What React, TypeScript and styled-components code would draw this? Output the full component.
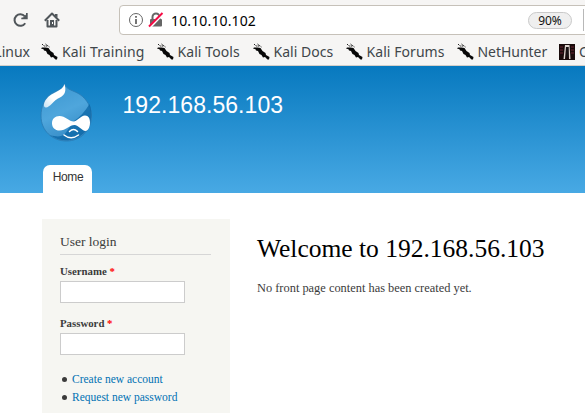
import React from "react";
import styled, { createGlobalStyle } from "styled-components";

const Global = createGlobalStyle`
  * { box-sizing: border-box; }
  body { margin: 0; background: #fff; overflow: hidden; }
`;
const Window = styled.div`
  width: 585px; height: 413px; overflow: hidden;
  display: flex; flex-direction: column;
  font-family: "Liberation Serif", serif; color: #3b3b3b;
`;
const Chrome = styled.div`
  height: 66px; flex: none; background: #f6f5f4; border-bottom: 1px solid #d3cfca;
  font-family: "Noto Sans", sans-serif; overflow: hidden;
`;
const Toolbar = styled.div`
  display: flex; align-items: flex-start; height: 38px; padding: 5px 0 0 12px;
`;
const ToolIcon = styled.svg`
  width: 18px; height: 18px; margin: 6px 14px 0 0; flex: none;
`;
const AddressBar = styled.div`
  margin-left: 43px; width: 480px; height: 30px; flex: none; display: flex; align-items: center;
  background: #fff; border: 1px solid #c6c1b9; border-radius: 4px; padding-left: 8px;
`;
const BarIcon = styled.svg<{ $gap: number }>`
  width: 16px; height: 16px; flex: none; margin-right: ${p => p.$gap}px;
`;
const Address = styled.span`
  font-size: 14px; color: #000; width: 357px; line-height: 28px; letter-spacing: 0.14px; padding-top: 1px;
`;
const Zoom = styled.span`
  width: 44px; height: 17px; border: 1px solid #c9c9c9; border-radius: 9px; background: #efefef;
  font-size: 12px; line-height: 15px; text-align: center; color: #111; margin-right: 11px;
`;
const Separator = styled.i`width: 1px; height: 22px; background: #b8b8b8;`;
const Bookmarks = styled.div`display: flex; align-items: center; height: 27px;`;
const Bookmark = styled.div<{ $w: number }>`
  display: flex; align-items: center; width: ${p => p.$w}px; flex: none; white-space: nowrap;
`;
const Label = styled.span<{ $ls?: number }>`
  font-size: 14px; line-height: 20px; color: #40464a; letter-spacing: ${p => p.$ls ?? 0}px;
`;
const LeadingLabel = styled(Label)`
  width: 30px; display: flex; justify-content: flex-end;
`;
const Favicon = styled.svg`width: 17px; height: 17px; flex: none; margin-right: 4px;`;

const Header = styled.header`
  height: 127px; flex: none; padding: 16px 0 0 40px;
  background: linear-gradient(#0779bf, #48a9e4);
  display: flex; flex-direction: column; justify-content: space-between;
  font-family: "Liberation Sans", sans-serif;
`;
const Brand = styled.div`display: flex; align-items: flex-start;`;
const Logo = styled.svg`width: 53px; height: 62px; flex: none;`;
const SiteName = styled.div`margin: 9px 0 0 29.5px; color: #fffeff; font-size: 23px; line-height: 28px; letter-spacing: 0.05px;`;
const Tab = styled.div`
  width: 49px; height: 28px; margin-left: 3px; background: #fff; border-radius: 7px 7px 0 0;
  color: #333; font-size: 12px; line-height: 24px; text-align: center; letter-spacing: -0.4px; padding-left: 1px;
`;
const Page = styled.main`display: flex; flex: 1; padding: 27px 0 0 42px;`;
const Sidebar = styled.aside`
  width: 188px; background: #f6f6f2; padding: 13px 19px 0 18px; flex: none; margin-top: -1px;
`;
const BlockTitle = styled.h2`
  margin: 0 0 7px; font-weight: 400; font-size: 13.5px; line-height: 20px; height: 23px;
  border-bottom: 1px solid #d6d6d6;
`;
const FieldLabel = styled.label`
  display: block; font-size: 10.8px; font-weight: 700; line-height: 18px; height: 19px;
`;
const Required = styled.span`color: #f00;`;
const Input = styled.input`
  display: block; width: 125px; height: 22px; border: 1px solid #ccc; background: #fff; padding: 2px;
  margin: 0 0 11px; outline: 0;
`;
const Links = styled.ul`
  margin: 15px 0 0; padding: 0; list-style: none; font-size: 11.5px; line-height: 18px;
`;
const LinkItem = styled.li`
  display: flex; align-items: center; white-space: nowrap;
  &::before { content: ""; width: 5px; height: 5px; border-radius: 50%; background: #3b3b3b; margin: 1px 5px 0 2px; }
`;
const Link = styled.a`color: #0071b3; text-decoration: none;`;
const Content = styled.section`padding: 12px 0 0 27px;`;
const Title = styled.h1`margin: 0; font-size: 25.5px; line-height: 34px; font-weight: 400; color: #000; white-space: nowrap;`;
const Body = styled.p`margin: 13px 0 0; font-size: 12.4px; line-height: 19px; white-space: nowrap;`;

const KaliIcon = () => (
  <Favicon viewBox="0 0 17 17">
    <path d="M1 4.500 4.500 4.500 7.500 5 9.500 8 12.500 10 13 12 16.500 14 16 16.500 14.500 16.500 12 14 10 14.500 8.500 12 6.500 11 5 8 3 7.500 2.500 6.300 0 5.500Z" fill="#080808" />
    <path d="M1 1 3 3 7 3M4.500 1 8.500 4" fill="none" stroke="#222" strokeWidth="1" strokeDasharray="1.500 .700" />
  </Favicon>
);

const bookmarks = [
  { text: "Kali Training", w: 115.5, ls: 0.12 },
  { text: "Kali Tools", w: 96, ls: 0.08 },
  { text: "Kali Docs", w: 93, ls: 0.04 },
  { text: "Kali Forums", w: 111, ls: 0.06 },
  { text: "NetHunter", w: 101.5, ls: -0.04 },
];

export default function App() {
  return (
    <Window>
      <Global />
      <Chrome>
        <Toolbar>
          <ToolIcon viewBox="0 0 18 18" fill="none">
            <path d="M13.2 12.2A5.8 5.8 0 1 1 12.8 5.3" stroke="#50565a" strokeWidth="2" />
            <path d="M15.7 2V8.2H9.3V6.8L11.5 6.2 14 3.5V2Z" fill="#50565a" />
          </ToolIcon>
          <ToolIcon viewBox="0 0 18 18">
            <path d="M.8 9.700 8 2.500 15.200 9.700" fill="none" stroke="#50565a" strokeWidth="2" strokeLinejoin="round" />
            <path d="M3.500 9V15.500H12.500V9" fill="none" stroke="#50565a" strokeWidth="2" strokeLinejoin="round" />
            <path d="M11 3H13.500V6.500L11 5ZM6 9H10V16H6Z" fill="#50565a" />
            <path d="M8 11H9V13H8Z" fill="#fff" />
          </ToolIcon>
          <AddressBar>
            <BarIcon $gap={4} viewBox="0 0 16 16">
              <circle cx="8" cy="8" r="6.5" fill="none" stroke="#666" />
              <path d="M7.1 4H8.9V5.8H7.1ZM7.1 7H8.9V12H7.1Z" fill="#666" />
            </BarIcon>
            <BarIcon $gap={7} viewBox="0 0 16 16">
              <path d="M4.5 8V5a3.5 3.5 0 0 1 7 0V8" fill="none" stroke="#666" strokeWidth="2" />
              <rect x="2" y="7" width="12" height="7.5" rx="1" fill="#666" />
              <path d="M1.5 15.5 15 1.5" stroke="#fff" strokeWidth="3" />
              <path d="M1 14.5 14.5 1" stroke="#f50b45" strokeWidth="2" />
            </BarIcon>
            <Address>10.10.10.102</Address>
            <Zoom>90%</Zoom>
            <Separator />
          </AddressBar>
        </Toolbar>
        <Bookmarks>
          <Bookmark $w={41}><LeadingLabel>Linux</LeadingLabel></Bookmark>
          {bookmarks.map(b => (
            <Bookmark key={b.text} $w={b.w}>
              <KaliIcon />
              <Label $ls={b.ls}>{b.text}</Label>
            </Bookmark>
          ))}
          <Bookmark $w={50}>
            <Favicon viewBox="0 0 17 17">
              <path d="M1 1H17V17H1Z" fill="#190b0b" />
              <path d="M2 4H5M2 7H5M2 10H5M13 4H16M13 7H16M13 10H16" stroke="#623" />
              <path d="M7 2H11.500L12.500 16H11L10.500 4H8L7 16H5.500Z" fill="#ddd3ce" />
              <path d="M9.300 4V14" stroke="#161112" strokeWidth="2.200" />
            </Favicon>
            <Label>Offensive</Label>
          </Bookmark>
        </Bookmarks>
      </Chrome>
      <Header>
        <Brand>
          <Logo viewBox="0 0 53 62">
            <defs>
              <linearGradient id="drop" x1=".2" y1="0" x2=".6" y2="1">
                <stop offset="0" stopColor="#3b96d0" />
                <stop offset=".5" stopColor="#4fa6dc" />
                <stop offset="1" stopColor="#3389c4" />
              </linearGradient>
              <linearGradient id="shine" x1="1" y1="0" x2="0" y2="1">
                <stop offset=".6" stopColor="#fff" />
                <stop offset="1" stopColor="#fff" stopOpacity=".7" />
              </linearGradient>
            </defs>
            <path d="M24.500 2C26.500 8 34 8.500 40 12.500 47 17.500 51.500 25 51.500 34 51.500 49 40 59 26.500 59 12 59 1 48.500 1 34 1 25 4 18 9.500 13 16 8 23 8.500 24.500 2Z" fill="url(#drop)" stroke="#2a7db5" strokeWidth=".9" />
            <path d="M49.500 22C53 31 52 44 43.500 51.500 34 60 20 60.500 10 53 20 56 24 54 27 49L34 39Q43 33 49.500 22Z" fill="#0763a3" opacity=".7" />
            <path d="M24.500 2C26.500 9 25 13 20 15.500 13 18.500 10 25.500 6 25.500 3 25.500 3.500 21 6 17.500 12 9.500 22 10 24.500 2Z" fill="url(#shine)" />
            <path d="M19.500 34C25 34 29.500 39.500 33.500 39.500 37.500 39.500 40.500 33.500 45 33.500 48.500 33.500 50 36.500 50 40.500 50 45 48 49 45.500 49 42 49 38.500 43 34.500 43 29.500 43 26 48.500 19.500 48.500 15 48.500 12 45.500 12 41.200 12 37 15 34 19.500 34Z" fill="#fff" />
            <path d="M29.500 49.500Q33.500 45.500 37.500 49.500M24 53Q31 58.500 38.500 53" fill="none" stroke="#fff" strokeWidth="1.500" strokeLinecap="round" />
          </Logo>
          <SiteName>192.168.56.103</SiteName>
        </Brand>
        <Tab>Home</Tab>
      </Header>
      <Page>
        <Sidebar>
          <BlockTitle>User login</BlockTitle>
          <FieldLabel htmlFor="user">Username <Required>*</Required></FieldLabel>
          <Input id="user" />
          <FieldLabel htmlFor="pass">Password <Required>*</Required></FieldLabel>
          <Input id="pass" type="password" />
          <Links>
            <LinkItem><Link>Create new account</Link></LinkItem>
            <LinkItem><Link>Request new password</Link></LinkItem>
          </Links>
        </Sidebar>
        <Content>
          <Title>Welcome to 192.168.56.103</Title>
          <Body>No front page content has been created yet.</Body>
        </Content>
      </Page>
    </Window>
  );
}
